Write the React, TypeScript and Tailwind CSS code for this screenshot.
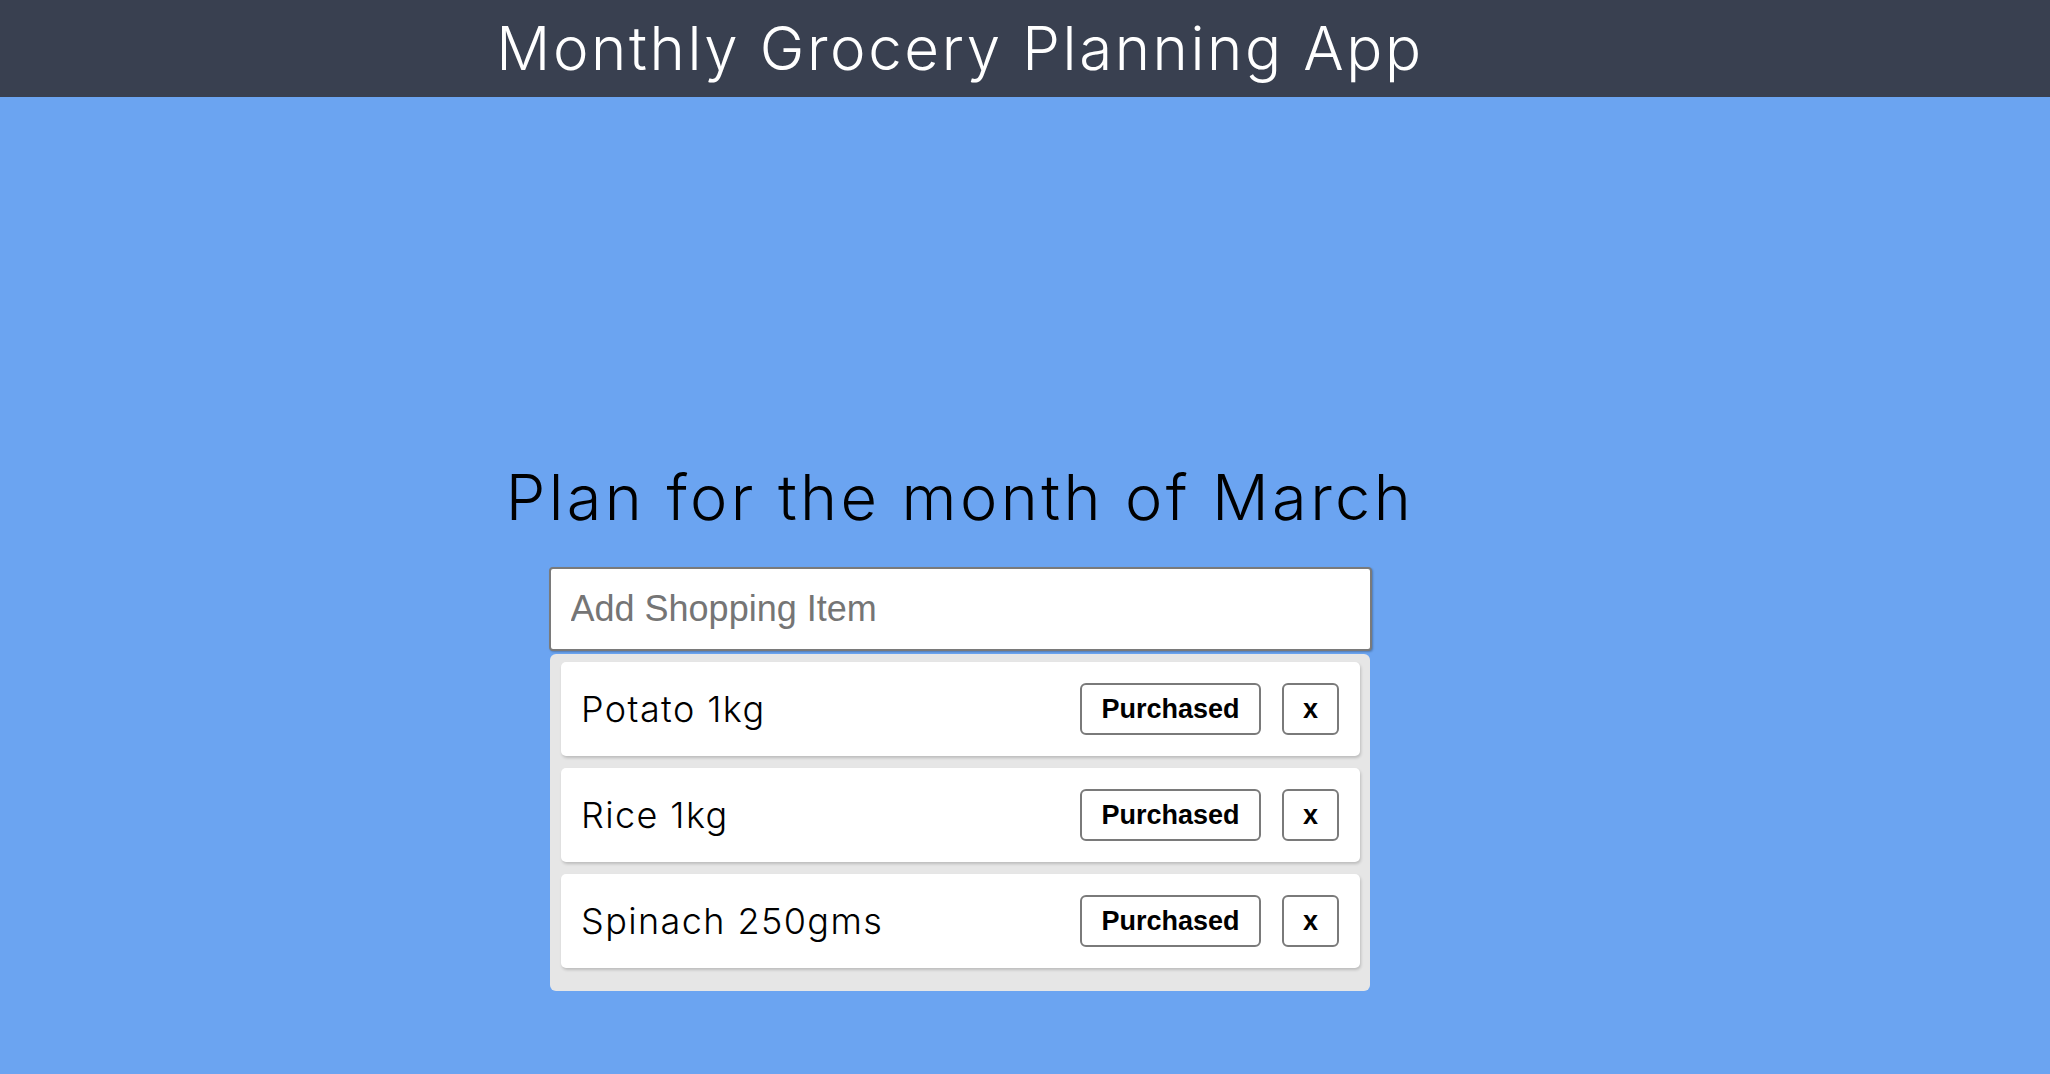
import { useState } from "react";

// ---------------------------------------------------------------------------
// Grocery list page
// ---------------------------------------------------------------------------

interface GroceryItem {
  id: number;
  name: string;
  purchased: boolean;
}

const initialItems: GroceryItem[] = [
  { id: 1, name: "Potato 1kg", purchased: false },
  { id: 2, name: "Rice 1kg", purchased: false },
  { id: 3, name: "Spinach 250gms", purchased: false },
];

const displayFont = { fontFamily: "Inter, 'Open Sans', sans-serif" };
const uiFont = { fontFamily: "'Liberation Sans', Arial, sans-serif" };

function ItemRow({
  item,
  onToggle,
  onRemove,
}: {
  item: GroceryItem;
  onToggle: () => void;
  onRemove: () => void;
}) {
  return (
    <div className="flex h-[94px] items-center rounded-[5px] bg-white pl-[20px] pr-[21px] shadow-[1px_2px_3px_rgba(0,0,0,0.18)]">
      <span
        className={`flex-1 text-[36px] font-light tracking-[1.4px] text-black ${
          item.purchased ? "line-through" : ""
        }`}
        style={displayFont}
      >
        {item.name}
      </span>
      <button
        onClick={onToggle}
        className="h-[52px] w-[181px] rounded-[6px] border-2 border-[#7a7a7a] bg-white text-[27px] font-bold text-black"
        style={uiFont}
      >
        Purchased
      </button>
      <button
        onClick={onRemove}
        className="ml-[21px] h-[52px] w-[57px] rounded-[6px] border-2 border-[#7a7a7a] bg-white text-[27px] font-bold text-black"
        style={uiFont}
      >
        x
      </button>
    </div>
  );
}

export default function App() {
  const [items, setItems] = useState(initialItems);
  const [draft, setDraft] = useState("");

  const addItem = (e: React.FormEvent) => {
    e.preventDefault();
    if (!draft.trim()) return;
    setItems((prev) => [...prev, { id: Date.now(), name: draft.trim(), purchased: false }]);
    setDraft("");
  };

  return (
    <div className="min-h-[1074px] bg-[#6ba4f1]">
      {/* Header */}
      <header className="h-[97px] bg-[#394050]">
        <div className="flex h-full w-[1920px] items-center justify-center pb-[2px]">
          <h1
            className="text-[60px] font-light leading-none tracking-[2.6px] text-white"
            style={displayFont}
          >
            Monthly Grocery Planning App
          </h1>
        </div>
      </header>

      {/* Main */}
      <main className="flex w-[1920px] flex-col items-center">
        <h2
          className="mt-[369px] text-[63px] font-light leading-none tracking-[3.4px] text-black"
          style={displayFont}
        >
          Plan for the month of March
        </h2>

        <form onSubmit={addItem} className="mt-[38px]">
          <input
            value={draft}
            onChange={(e) => setDraft(e.target.value)}
            placeholder="Add Shopping Item"
            className="h-[84px] w-[823px] rounded-[4px] border-2 border-[#7a7a7a] bg-white px-[20px] text-[36px] text-black shadow-[1px_1px_2px_rgba(0,0,0,0.25)] outline-none placeholder:text-[#757575]"
            style={uiFont}
          />
        </form>

        {/* List */}
        <div className="mt-[3px] flex w-[820px] flex-col gap-[12px] rounded-[6px] bg-[#e6e6e6] pb-[23px] pl-[11px] pr-[10px] pt-[8px]">
          {items.map((item) => (
            <ItemRow
              key={item.id}
              item={item}
              onToggle={() =>
                setItems((prev) =>
                  prev.map((i) => (i.id === item.id ? { ...i, purchased: !i.purchased } : i)),
                )
              }
              onRemove={() => setItems((prev) => prev.filter((i) => i.id !== item.id))}
            />
          ))}
        </div>
      </main>
    </div>
  );
}
